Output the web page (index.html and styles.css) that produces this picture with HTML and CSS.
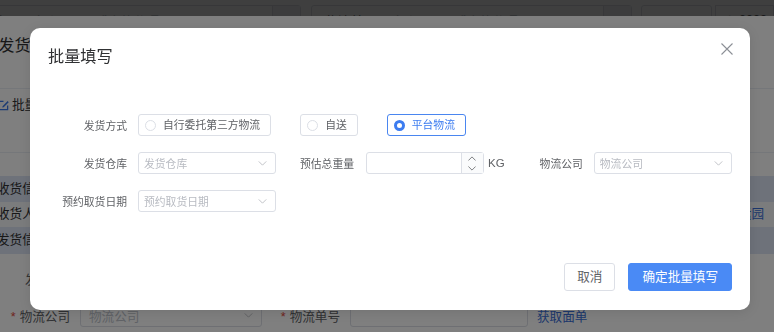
FILE: index.html
```html
<!DOCTYPE html>
<html lang="zh-CN">
<head>
	<meta charset="UTF-8">
	<title>批量填写</title>
	<link rel="stylesheet" href="styles.css">
</head>
<body>
	<!-- 页面筛选栏 -->
	<div class="filter-bar">
		<div class="f-input f-first"><span class="f-label">订单号</span><span class="f-holder">多个用逗号或空格分隔</span><span class="f-btn"></span></div>
		<div class="f-input f-second"><span class="f-label">物流单号</span><span class="f-holder">多个用逗号或空格分隔</span><span class="f-btn"></span></div>
		<div class="f-select">下单时间</div>
		<div class="f-date">◷ 2023</div>
	</div>
	<div class="drawer-mask"></div>

	<!-- 发货抽屉 -->
	<div class="drawer">
		<div class="drawer-head"><span class="drawer-title">批量发货</span></div>
		<div class="drawer-tool">
			<span class="tool-link">
				<svg class="tool-icon" viewBox="0 0 12 12" width="11" height="11"><path d="M6 1.5H1.5v9h9V6" fill="none" stroke="#3a78e8" stroke-width="1.4"/><path d="M10.5 1.2L5 6.7l-.4 1.6 1.6-.4 5.5-5.5z" fill="#3a78e8"/></svg>
				批量填写
			</span>
		</div>
		<div class="section-band">收货信息</div>
		<div class="section-row"><span>收货人：张三</span><span class="row-link">修改地址 运园</span></div>
		<div class="section-band section-band-tall">发货信息</div>
		<div class="drawer-row drawer-row-top"><span class="drawer-label">发货方式</span></div>
		<div class="drawer-row">
			<span class="drawer-label"><i class="req">*</i>物流公司</span>
			<span class="drawer-select">物流公司
				<svg viewBox="0 0 10 6" width="9" height="5"><path d="M.5.5L5 5 9.5.5" fill="none" stroke="#b4b7bd"/></svg>
			</span>
			<span class="drawer-label drawer-label-second"><i class="req">*</i>物流单号</span>
			<span class="drawer-input"></span>
			<span class="drawer-link">获取面单</span>
		</div>
	</div>
	<div class="modal-mask"></div>

	<!-- 批量填写弹窗 -->
	<div class="modal">
		<div class="modal-head">
			<span class="modal-title">批量填写</span>
			<a class="modal-close" href="javascript:void(0);">
				<svg viewBox="0 0 12 12" width="12" height="12"><path d="M.5.5l11 11M11.5.5l-11 11" stroke="#8c8f96" stroke-width="1.1"/></svg>
			</a>
		</div>
		<div class="modal-body">
			<div class="form-row">
				<label class="form-label">发货方式</label>
				<div class="radio-group">
					<span class="radio"><i class="radio-dot"></i>自行委托第三方物流</span>
					<span class="radio"><i class="radio-dot"></i>自送</span>
					<span class="radio radio-on"><i class="radio-dot"></i>平台物流</span>
				</div>
			</div>
			<div class="form-row">
				<label class="form-label">发货仓库</label>
				<span class="select">发货仓库
					<svg viewBox="0 0 10 6" width="9" height="5"><path d="M.5.5L5 5 9.5.5" fill="none" stroke="#b4b7bd"/></svg>
				</span>
				<label class="form-label-inline label-weight">预估总重量</label>
				<span class="number">
					<span class="number-step">
						<svg viewBox="0 0 10 6" width="8" height="5"><path d="M.5 5.5L5 1l4.5 4.5" fill="none" stroke="#606266"/></svg>
						<svg viewBox="0 0 10 6" width="8" height="5"><path d="M.5.5L5 5 9.5.5" fill="none" stroke="#606266"/></svg>
					</span>
				</span>
				<span class="unit">KG</span>
				<label class="form-label-inline label-company">物流公司</label>
				<span class="select">物流公司
					<svg viewBox="0 0 10 6" width="9" height="5"><path d="M.5.5L5 5 9.5.5" fill="none" stroke="#b4b7bd"/></svg>
				</span>
			</div>
			<div class="form-row">
				<label class="form-label">预约取货日期</label>
				<span class="select">预约取货日期
					<svg viewBox="0 0 10 6" width="9" height="5"><path d="M.5.5L5 5 9.5.5" fill="none" stroke="#b4b7bd"/></svg>
				</span>
			</div>
		</div>
		<div class="modal-foot">
			<a class="btn" href="javascript:void(0);">取消</a>
			<a class="btn btn-primary" href="javascript:void(0);">确定批量填写</a>
		</div>
	</div>
</body>
</html>
```

FILE: styles.css
```css
* {
    box-sizing: border-box;
}
body {
    margin: 0;
    width: 774px;
    height: 332px;
    overflow: hidden;
    background: #ffffff;
    font-family: "Liberation Sans", "Noto Sans CJK SC", sans-serif;
    color: #333333;
}
a {
    text-decoration: none;
}

/* 筛选栏 */
.filter-bar {
    display: flex;
    padding-top: 5px;
    font-size: 12.6px;
}
.f-input {
    display: flex;
    align-items: center;
    height: 30px;
    border: 1px solid #dcdfe6;
    border-radius: 3px;
    color: #c0c4cc;
}
.f-first {
    width: 341px;
    margin-left: -30px;
    padding-left: 8px;
}
.f-second {
    width: 330px;
    margin-left: 10px;
    padding-left: 13px;
}
.f-label {
    color: #909399;
    margin-right: 16px;
}
.f-second .f-label {
    color: #606266;
}
.f-btn {
    margin-left: auto;
    width: 28px;
    height: 28px;
    background: #f0f2f5;
    border-left: 1px solid #dcdfe6;
}
.f-select {
    margin-left: 9px;
    width: 73px;
    height: 30px;
    border: 1px solid #dcdfe6;
    border-radius: 3px;
    padding: 6px 0 0 10px;
    color: #303133;
}
.f-date {
    margin-left: 3px;
    width: 60px;
    height: 30px;
    border: 1px solid #dcdfe6;
    padding: 6px 0 0 8px;
    color: #606266;
}

/* 遮罩层 */
.drawer-mask,
.modal-mask {
    position: fixed;
    top: 0;
    left: 0;
    width: 100%;
    height: 100%;
    background: #000000;
    opacity: 0.5;
}

/* 抽屉 */
.drawer {
    position: fixed;
    top: 16px;
    left: 0;
    right: 0;
    bottom: 0;
    background: #ffffff;
    font-size: 12px;
}
.drawer-head {
    height: 73px;
    padding-top: 17px;
    border-bottom: 1px solid #ebeef5;
}
.drawer-title {
    display: block;
    margin-left: -34px;
    font-size: 16.2px;
    line-height: 24px;
    color: #303133;
}
.drawer-tool {
    height: 64px;
    padding-top: 7px;
    border-bottom: 1px solid #ebeef5;
    margin-bottom: 23px;
}
.tool-link {
    display: flex;
    align-items: center;
    gap: 3px;
    margin-left: -2px;
    font-size: 12.6px;
    line-height: 18px;
    color: #303133;
}
.section-band {
    height: 26px;
    line-height: 26px;
    margin-left: -3px;
    background: #dce4f4;
    color: #303133;
    font-size: 12.6px;
}
.section-band-tall {
    height: 27px;
    line-height: 27px;
}
.section-row {
    display: flex;
    justify-content: space-between;
    height: 25px;
    line-height: 25px;
    margin-left: -3px;
    background: #f7f8fa;
    font-size: 12.6px;
    color: #303133;
}
.row-link {
    color: #3a6fd8;
    margin-right: 10px;
}
.drawer-row {
    display: flex;
    align-items: center;
    font-size: 12.6px;
    color: #606266;
}
.drawer-row-top {
    height: 49px;
    padding-left: 25px;
}
.drawer-label {
    width: 70px;
    text-align: right;
    margin-right: 10px;
}
.drawer-row-top .drawer-label {
    width: auto;
}
.req {
    font-style: normal;
    color: #e0493f;
    margin-right: 4px;
}
.drawer-select,
.drawer-input {
    display: flex;
    align-items: center;
    justify-content: space-between;
    width: 182px;
    height: 24px;
    padding: 0 8px;
    border: 1px solid #dcdfe6;
    border-radius: 3px;
    color: #c0c4cc;
}
.drawer-label-second {
    margin-left: 8px;
}
.drawer-input {
    width: 178px;
}
.drawer-link {
    margin-left: 9px;
    color: #3a6fd8;
}

/* 弹窗 */
.modal {
    position: fixed;
    top: 28px;
    left: 30px;
    width: 720px;
    height: 282px;
    background: #ffffff;
    border-radius: 10px;
    box-shadow: 0 2px 12px rgba(0, 0, 0, 0.1);
    display: flex;
    flex-direction: column;
}
.modal-head {
    height: 56px;
    padding: 18px 18px 0 18px;
}
.modal-title {
    font-size: 16.2px;
    line-height: 20px;
    color: #303133;
}
.modal-close {
    position: absolute;
    top: 15px;
    right: 17px;
    display: block;
    width: 12px;
    height: 12px;
    line-height: 0;
}
.modal-body {
    padding-top: 30px;
    display: flex;
    flex-direction: column;
    gap: 16px;
    font-size: 10.8px;
    color: #606266;
}
.form-row {
    display: flex;
    align-items: center;
    height: 22px;
}
.form-label {
    width: 97px;
    margin-right: 11px;
    text-align: right;
}
.form-label-inline {
    margin-right: 12px;
}
.label-weight {
    margin-left: 24px;
}
.label-company {
    margin-left: 35px;
    margin-right: 11px;
}
.radio-group {
    display: flex;
    gap: 29px;
}
.radio {
    display: flex;
    align-items: center;
    height: 22px;
    padding: 0 10px 0 6px;
    border: 1px solid #dcdfe6;
    border-radius: 3px;
    line-height: 20px;
    color: #606266;
}
.radio-dot {
    width: 11px;
    height: 11px;
    margin-right: 7px;
    border: 1px solid #dcdfe6;
    border-radius: 50%;
    background: #ffffff;
}
.radio-on {
    border-color: #4a86f0;
    color: #3c7cf0;
}
.radio-on .radio-dot {
    border: 3.5px solid #3c7cf0;
}
.select {
    display: flex;
    align-items: center;
    justify-content: space-between;
    width: 138px;
    height: 22px;
    padding: 0 8px 0 5px;
    border: 1px solid #dcdfe6;
    border-radius: 3px;
    color: #b8bbc2;
}
.number {
    display: flex;
    justify-content: flex-end;
    width: 118px;
    height: 22px;
    border: 1px solid #dcdfe6;
    border-radius: 3px;
}
.number-step {
    width: 22px;
    display: flex;
    flex-direction: column;
    align-items: center;
    justify-content: space-around;
    border-left: 1px solid #dcdfe6;
    background: #fafbfc;
}
.unit {
    margin-left: 4px;
    font-size: 11.5px;
    color: #606266;
}
.modal-foot {
    margin-top: auto;
    display: flex;
    justify-content: flex-end;
    gap: 13px;
    padding: 0 18px 19px 0;
}
.btn {
    display: block;
    height: 28px;
    line-height: 26px;
    padding: 0 12px;
    border: 1px solid #dcdfe6;
    border-radius: 3px;
    font-size: 12.6px;
    color: #606266;
    background: #ffffff;
}
.btn-primary {
    padding: 0 13px;
    border-color: #4a8af5;
    background: #4a8af5;
    color: #ffffff;
}
```
